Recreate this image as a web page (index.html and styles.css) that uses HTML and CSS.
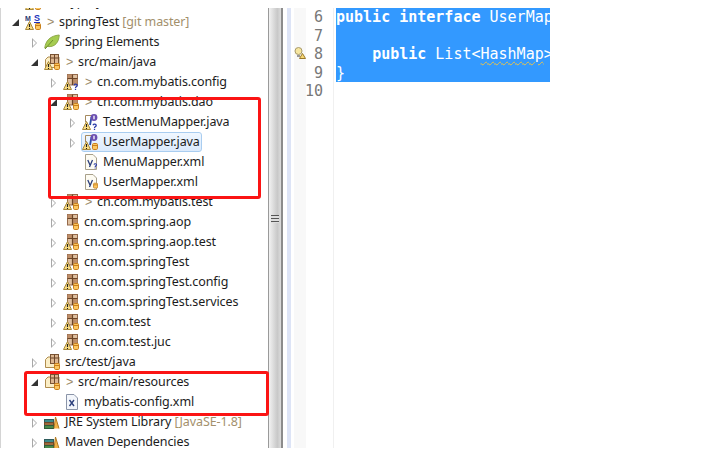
FILE: index.html
```html
<!DOCTYPE html>
<html lang="en">
<head>
<meta charset="utf-8">
<title>springTest</title>
<link rel="stylesheet" href="styles.css">
</head>
<body>
<svg class="defs" aria-hidden="true">
  <symbol id="warn" viewBox="0 0 16 16"><path d="M4.500 7.500 .5 15.500H8.500Z" fill="#f9dc82" stroke="#a8883c"/><path d="M4.500 10v3M4.500 14v1" stroke="#222" stroke-width="1.100"/></symbol>
  <symbol id="cyl" viewBox="0 0 16 16"><rect x="10.500" y="9.500" width="5" height="6" rx="1.200" fill="#fcc862" stroke="#c9801c"/><path d="M10.500 11.500h5" stroke="#c9801c"/></symbol>
  <symbol id="qm" viewBox="0 0 16 16"><path d="M11 11.200c.5-1.400 3.200-1.400 3.200.2 0 1.200-1.700 1.200-1.700 2.600M12.500 14.800v1.200" fill="none" stroke="#2a3aa8" stroke-width="1.300"/></symbol>
  <symbol id="box" viewBox="0 0 16 16"><rect x="4.500" y=".5" width="10" height="10.500" fill="#dfc0a0" stroke="#94694a"/><rect x="4.500" y=".5" width="5" height="4" fill="#bd8d68"/><rect x="9.500" y="4.500" width="5" height="6" fill="#bd8d68"/><path d="M4.500 4.500h10M9.500 .5v10.500" stroke="#6b4528" stroke-width="1.200"/></symbol>
  <symbol id="pkg" viewBox="0 0 16 16"><use href="#box"/><use href="#warn"/><use href="#cyl"/></symbol>
  <symbol id="pkgq" viewBox="0 0 16 16"><use href="#box"/><use href="#warn"/><use href="#qm"/></symbol>
  <symbol id="pkgok" viewBox="0 0 16 16"><use href="#box"/><use href="#cyl"/></symbol>
  <symbol id="src" viewBox="0 0 16 16"><path d="M1.500 13.500V5.500L4 3H15V10L13 13.500Z" fill="#fbeec6" stroke="#b08d4e"/><rect x="6.500" y=".5" width="8" height="9" fill="#dcb690" stroke="#7a5434"/><path d="M6.500 4h8M10.500 .5v9" stroke="#6b4528"/><use href="#cyl"/></symbol>
  <symbol id="srcw" viewBox="0 0 16 16"><use href="#src"/><use href="#warn"/></symbol>
  <symbol id="javaf" viewBox="0 0 16 16"><path d="M3.500 8V1.500H11" fill="none" stroke="#a58a5e"/><path d="M9.500 3 8 11" stroke="#2c4ea8" stroke-width="1.800"/><circle cx="12" cy="3.500" r="3.400" fill="#6a4fb0"/><path d="M12 1.700v3.600" stroke="#fff" stroke-width="1.300"/><use href="#warn"/></symbol>
  <symbol id="xmlf" viewBox="0 0 13 16"><path d="M.5 .5H8L11.500 4V15.500H.5Z" fill="#fdfbf2" stroke="#a8a08a"/><path d="M2.800 6 5 11M7.500 6 4.500 13" fill="none" stroke="#2c3f7c" stroke-width="1.300"/></symbol>
  <symbol id="xmlx" viewBox="0 0 13 16"><path d="M.5 .5H8L11.500 4V15.500H.5Z" fill="#f3f6fb" stroke="#8a94a8"/><path d="M3.500 6 8 12M8 6 3.500 12" stroke="#2c3f7c" stroke-width="1.400"/></symbol>
  <symbol id="leaf" viewBox="0 0 16 16"><path d="M.8 14C1.500 7 6 1.800 15.200 1 15 8 11 13.500 3.500 12.500Z" fill="#a5cc50" stroke="#8fa94a"/><path d="M1 15 9 6" stroke="#6f8f2e"/></symbol>
  <symbol id="lib" viewBox="0 0 16 16"><rect x=".5" y="5.500" width="9" height="3" fill="#3c8a8a" stroke="#2f5c5c"/><rect x=".5" y="8.500" width="9" height="3" fill="#a06a3c" stroke="#6f4a2a"/><rect x=".5" y="11.500" width="9" height="3" fill="#4a8a4a" stroke="#2f5c3a"/><path d="M10 14.500 11.500 3 15 14.500" fill="#f1b34a" stroke="#b07820"/></symbol>
  <symbol id="ms" viewBox="0 0 16 16"><text x="0" y="7" class="ms-m">M</text><text x="9" y="7" class="ms-s">S</text><path d="M9 8.500h6" stroke="#2233bb"/><use href="#warn"/><use href="#cyl"/></symbol>
  <symbol id="bulb" viewBox="0 0 12 12"><circle cx="4.500" cy="4" r="3.500" fill="#f6e6a0" stroke="#a89a6a"/><path d="M3 8h3v2H3Z" fill="#999"/><path d="M8.500 6.500 5.500 11.500H11.500Z" fill="#f7d774" stroke="#9a7a2c"/></symbol>
</svg>

<main class="ide">
  <section class="explorer">
    <ul class="tree">
      <li class="row l0 clipped"><i class="arrow"></i><svg class="ico"><use href="#pkg"/></svg><span class="pre">&gt;</span><span>myproject</span></li>
      <li class="row l0"><i class="arrow open"></i><svg class="ico"><use href="#ms"/></svg><span class="pre">&gt;</span><span>springTest <em>[git master]</em></span></li>
      <li class="row l1"><i class="arrow"></i><svg class="ico"><use href="#leaf"/></svg><span>Spring Elements</span></li>
      <li class="row l1"><i class="arrow open"></i><svg class="ico"><use href="#srcw"/></svg><span class="pre">&gt;</span><span>src/main/java</span></li>
      <li class="row l2"><i class="arrow"></i><svg class="ico"><use href="#pkgq"/></svg><span class="pre">&gt;</span><span>cn.com.mybatis.config</span></li>
      <li class="row l2"><i class="arrow open"></i><svg class="ico"><use href="#pkg"/></svg><span class="pre">&gt;</span><span>cn.com.mybatis.dao</span></li>
      <li class="row l3"><i class="arrow"></i><svg class="ico"><use href="#javaf"/><use href="#qm"/></svg><span>TestMenuMapper.java</span></li>
      <li class="row l3"><i class="arrow"></i><span class="selected"><svg class="ico"><use href="#javaf"/><use href="#cyl"/></svg><span>UserMapper.java</span></span></li>
      <li class="row l3"><i class="arrow none"></i><svg class="ico xml"><use href="#xmlf"/><use href="#qm"/></svg><span>MenuMapper.xml</span></li>
      <li class="row l3"><i class="arrow none"></i><svg class="ico xml"><use href="#xmlf"/><use href="#cyl"/></svg><span>UserMapper.xml</span></li>
      <li class="row l2"><i class="arrow"></i><svg class="ico"><use href="#pkg"/></svg><span class="pre">&gt;</span><span>cn.com.mybatis.test</span></li>
      <li class="row l2"><i class="arrow"></i><svg class="ico"><use href="#pkgok"/></svg><span>cn.com.spring.aop</span></li>
      <li class="row l2"><i class="arrow"></i><svg class="ico"><use href="#pkg"/></svg><span>cn.com.spring.aop.test</span></li>
      <li class="row l2"><i class="arrow"></i><svg class="ico"><use href="#pkg"/></svg><span>cn.com.springTest</span></li>
      <li class="row l2"><i class="arrow"></i><svg class="ico"><use href="#pkg"/></svg><span>cn.com.springTest.config</span></li>
      <li class="row l2"><i class="arrow"></i><svg class="ico"><use href="#pkg"/></svg><span>cn.com.springTest.services</span></li>
      <li class="row l2"><i class="arrow"></i><svg class="ico"><use href="#pkg"/></svg><span>cn.com.test</span></li>
      <li class="row l2"><i class="arrow"></i><svg class="ico"><use href="#pkg"/></svg><span>cn.com.test.juc</span></li>
      <li class="row l1"><i class="arrow"></i><svg class="ico"><use href="#src"/></svg><span>src/test/java</span></li>
      <li class="row l1"><i class="arrow open"></i><svg class="ico"><use href="#src"/></svg><span class="pre">&gt;</span><span>src/main/resources</span></li>
      <li class="row l2"><i class="arrow none"></i><svg class="ico xml"><use href="#xmlx"/></svg><span>mybatis-config.xml</span></li>
      <li class="row l1"><i class="arrow"></i><svg class="ico"><use href="#lib"/></svg><span>JRE System Library <em>[JavaSE-1.8]</em></span></li>
      <li class="row l1"><i class="arrow"></i><svg class="ico"><use href="#lib"/></svg><span>Maven Dependencies</span></li>
    </ul>
  </section>

  <div class="sash"><i class="grip"></i></div>
  <div class="overview"></div>
  <div class="gutter"><svg class="bulb"><use href="#bulb"/></svg></div>
  <div class="numbers">
    <span>6</span><span>7</span><span>8</span><span>9</span><span>10</span>
  </div>
  <pre class="code"><b>public</b> <b>interface</b> UserMapper {

    <b>public</b> List&lt;<u>HashMap</u>&gt; getList();
}</pre>
</main>

<div class="mark mark-dao"></div>
<div class="mark mark-res"></div>
</body>
</html>
```
FILE: styles.css
```css
html, body {
  margin: 0;
  height: 100%;
  background: #fff;
  overflow: hidden;
}
.defs {
  position: absolute;
  width: 0;
  height: 0;
}
.ms-m { font: bold 7px "Liberation Sans", sans-serif; fill: #2a3a70; }
.ms-s { font: bold 9px "Liberation Sans", sans-serif; fill: #2233bb; }

.ide {
  display: flex;
  width: 550px;
  height: 440px;
  margin-top: 8px;
}

/* Package explorer */
.explorer {
  width: 267px;
  flex: none;
  overflow: hidden;
  border-left: 1px solid #d4d4d4;
}
.tree {
  list-style: none;
  margin: -16px 0 0;
  padding: 0;
  font: 12.5px/20px "Noto Sans", "Open Sans", sans-serif;
  letter-spacing: -0.1px;
  color: #1c1c1c;
}
.row {
  display: flex;
  align-items: center;
  height: 20px;
  white-space: nowrap;
}
.l0 { padding-left: 11px; }
.l1 { padding-left: 30px; }
.l2 { padding-left: 49px; }
.l3 { padding-left: 68px; }
.row em {
  font-style: normal;
  color: #a3906c;
}
.arrow {
  flex: none;
  width: 13px;
  height: 11px;
  position: relative;
}
.arrow::before {
  content: "";
  display: block;
  margin: 1px 0 0 1px;
  width: 0;
  height: 0;
  border-style: solid;
  border-width: 5px 0 5px 5px;
  border-color: transparent transparent transparent #a8a8a8;
}
.arrow::after {
  content: "";
  position: absolute;
  left: 2px;
  top: 3px;
  border-style: solid;
  border-width: 3px 0 3px 3px;
  border-color: transparent transparent transparent #fff;
}
.arrow.open::before {
  margin: 2px 0 0;
  border-width: 0 0 7px 7px;
  border-color: transparent transparent #333 transparent;
}
.arrow.open::after, .arrow.none::before, .arrow.none::after { display: none; }
.ico {
  flex: none;
  width: 16px;
  height: 16px;
  margin-right: 5px;
  overflow: visible;
}
.ico.xml {
  margin-left: 3px;
  margin-right: 5px;
  width: 13px;
}
.pre {
  flex: none;
  width: 13px;
  margin-left: 1px;
  margin-right: -1px;
  color: #9a8a68;
  font-family: "Liberation Sans", sans-serif;
}
.selected {
  display: flex;
  align-items: center;
  height: 20px;
  box-sizing: border-box;
  margin-left: -1px;
  padding: 0 1px 0 0;
  border: 1px solid #a9cdf0;
  border-radius: 3px;
  background: linear-gradient(#f0f7ff, #dbeafc);
}

/* Sash between the views */
.sash {
  flex: none;
  box-sizing: border-box;
  width: 15px;
  display: flex;
  justify-content: center;
  align-items: flex-start;
  padding-top: 207px;
  border-left: 1px solid #9a9a9a;
  border-right: 2px solid #8c8c8c;
  background: linear-gradient(90deg, #f2f2f2, #e0e0e0 30%, #c8c8c8 70%, #dcdcdc);
}
.grip {
  width: 8px;
  height: 8px;
  background: repeating-linear-gradient(#555 0 1px, #ddd 1px 3px);
}
.overview {
  flex: none;
  width: 4px;
  margin-left: 4px;
  background: #dde4f6;
}
.gutter {
  flex: none;
  width: 12px;
  margin-left: 3px;
  background: #f8f8f8;
  position: relative;
}
.bulb {
  display: block;
  width: 12px;
  height: 12px;
  margin-top: 39px;
}
.numbers {
  flex: none;
  box-sizing: border-box;
  width: 28px;
  padding-right: 10px;
  border-right: 1px solid #f0f0f0;
  display: flex;
  flex-direction: column;
  align-items: flex-end;
  font: 15px/18.5px "DejaVu Sans Mono", monospace;
  color: #787878;
}
.code {
  flex: 1;
  align-self: flex-start;
  min-width: 0;
  height: 74px;
  margin: 0 0 0 2px;
  overflow: hidden;
  background: #3399ff;
  color: #fff;
  font: 15px/18.5px "DejaVu Sans Mono", monospace;
}
.code u {
  text-decoration: underline wavy #e8c34a 1px;
  text-underline-offset: 2px;
}

/* Hand-drawn annotations over the screenshot */
.mark {
  position: absolute;
  box-sizing: border-box;
  border: 3px solid #fb1414;
  border-radius: 3px;
}
.mark-dao {
  left: 48px;
  top: 97px;
  width: 213px;
  height: 102px;
}
.mark-res {
  left: 24px;
  top: 371px;
  width: 245px;
  height: 45px;
}
```
